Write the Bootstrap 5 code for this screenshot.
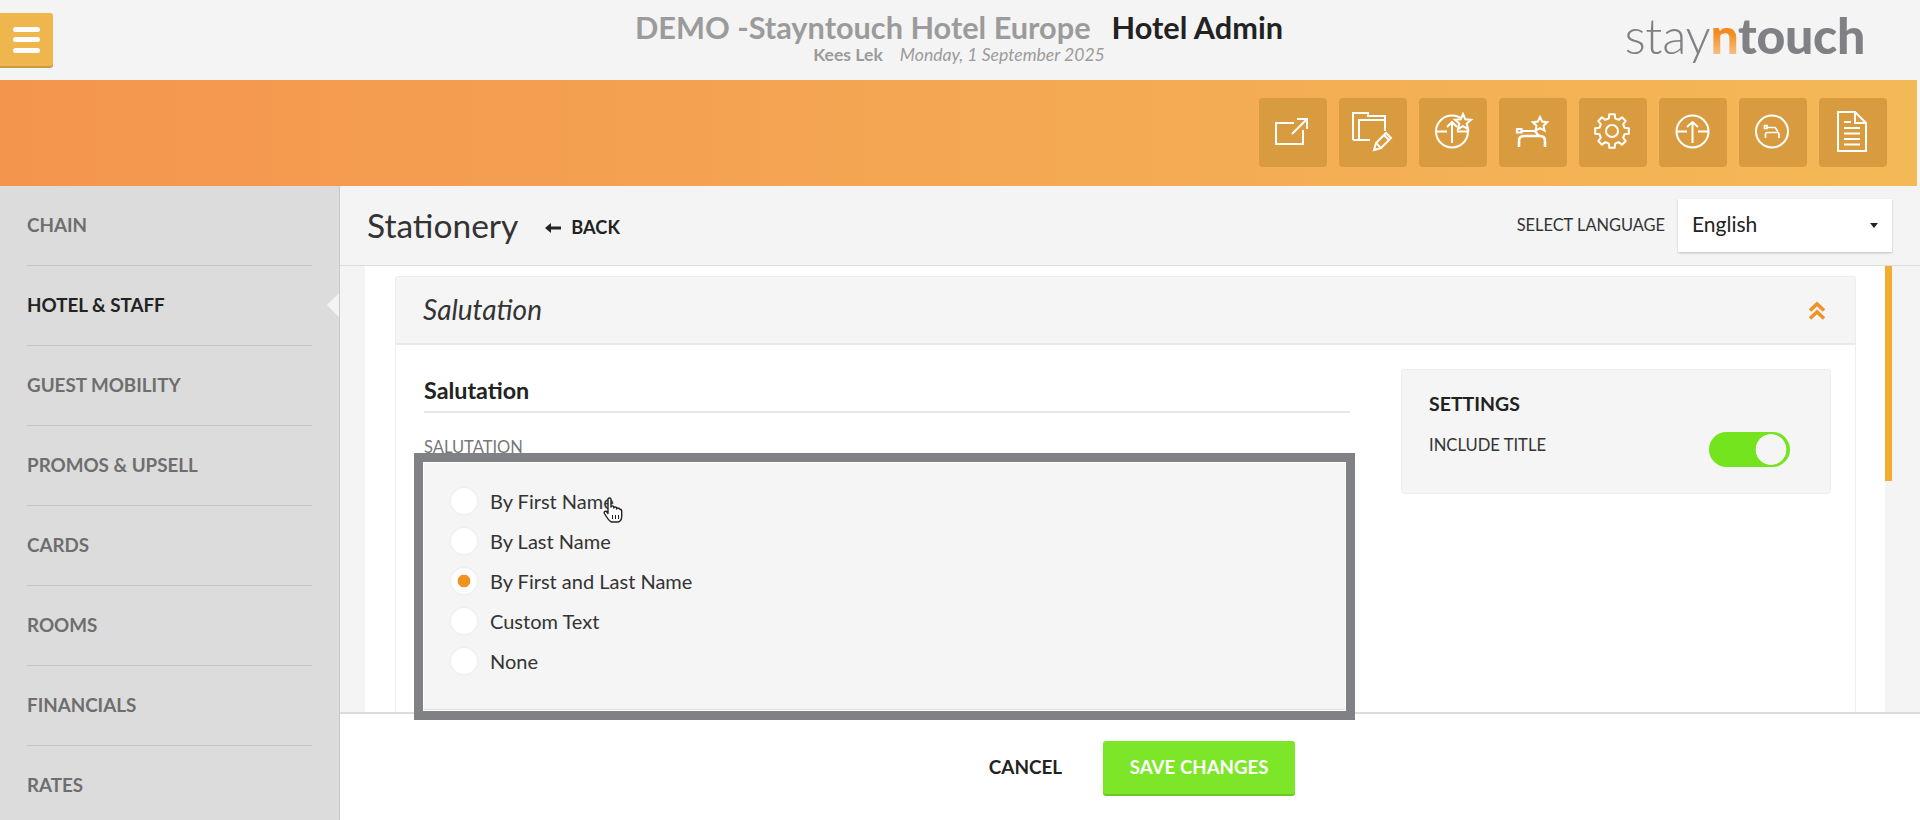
<!DOCTYPE html>
<html lang="en">
<head>
<meta charset="utf-8">
<title>Stationery</title>
<link rel="stylesheet" href="https://cdn.jsdelivr.net/npm/bootstrap@5.3.0/dist/css/bootstrap.min.css">
<style>
html,body{height:820px;overflow:hidden}
body{font-family:"Lato","Liberation Sans",sans-serif;background:#f4f4f4;color:#333}
.app-root{width:1920px;height:820px}
.top-head{height:80px;background:#f4f4f4}
.burger{left:0;top:13px;width:53px;height:53px;background:#f0b64e;border-radius:0 3px 3px 0;box-shadow:0 2px 0 #c99a45;gap:5.5px;padding-left:13px}
.burger span{display:block;width:27px;height:5px;background:#fff;border-radius:3px}
.head-titles{line-height:1;padding-top:13px;margin-left:-2px}
.h-site{font-size:30.7px;font-weight:700;color:#9b9b9b}
.h-mod{font-size:30.7px;font-weight:700;color:#222;margin-left:21px}
.h-sub{font-size:17.6px;color:#9b9b9b;margin-top:2px}
.h-user{font-weight:700;margin-right:17px}
.brand-logo{right:55px;top:5px;font-size:50px;line-height:60px;color:#808184;letter-spacing:-.3px}
.brand-logo .lg-l{font-weight:300}
.brand-logo .lg-n{font-weight:900;background:linear-gradient(#f28a1e 45%,#f8d8b0);-webkit-background-clip:text;background-clip:text;color:transparent}
.brand-logo .lg-t{font-weight:900}
.tool-band{height:106px;width:1917px;background:linear-gradient(90deg,#f4954e,#f4b957);padding:18px 30px 0 0;gap:12px}
.tool-btn{width:68px;height:69px;background:#d99b3f;border-radius:4px}
.tool-btn svg{width:68px;height:68px;fill:none;stroke:#fff;stroke-width:2}
.body-row{height:634px}
.side-nav{width:340px;background:#dcdcdc;border-right:1px solid #c9c9c9;overflow:hidden;flex-shrink:0}
.side-item{height:80px;margin:0 27px;border-bottom:1px solid #c8c8c8;padding-top:27px;font-size:18.8px;font-weight:700;color:#6e6e6e;line-height:24px;position:relative}
.side-item.is-on{color:#222}
.side-item.is-on::after{content:"";position:absolute;right:-27px;top:27px;border:12px solid transparent;border-right-color:#f4f4f4;border-left-width:0}
.main-col{width:1580px}
.page-head{height:80px;padding:0 28px 0 27px;border-bottom:1px solid #dedede}
.page-title{font-size:33.5px;font-weight:400;color:#333;margin:0}
.back-lnk{font-size:18.2px;font-weight:700;color:#222;margin-left:27px;gap:10px;text-decoration:none;padding-top:5px}
.lang-lbl{font-size:16.4px;color:#333;margin-right:13px}
.lang-sel{width:214px;height:53px;background:#fff;box-shadow:0 1px 2px rgba(0,0,0,.22);padding:0 14px;font-size:21px;color:#222;line-height:1}
.lang-txt{margin-top:-4px}
.lang-caret{border:4px solid transparent;border-top:5px solid #222;border-bottom:0}
.pane{height:446px;overflow:hidden;margin-left:25px;width:1520px;background:#fff;padding:10px 29px 0 30px}
.scroll-thumb{right:28px;top:80px;width:7px;height:215px;background:#f4ac30}
.panel-box{border:1px solid #eee;height:600px;border-radius:2px}
.panel-top{height:68px;background:#f5f5f5;border-bottom:2px solid #e9e9e9;padding:0 29px 0 27px}
.panel-ttl{font-size:28px;font-style:italic;font-weight:400;color:#333;margin:0}
.panel-main{padding:24px 21px 0 28px;gap:51px}
.left-col{width:926px;padding-top:6px}
.sec-ttl{font-size:23.3px;font-weight:700;color:#222;line-height:30px;padding-bottom:6px;border-bottom:2px solid #e9e9e9;margin:0}
.fld-lbl{font-size:16.5px;color:#777;margin-top:23px;line-height:22px}
.set-box{width:430px;height:125px;background:#f5f5f5;border:1px solid #eee;border-radius:3px;padding:20px 27px}
.set-ttl{font-size:19.5px;font-weight:700;color:#222;line-height:28px;margin:0}
.set-row{margin-top:14px;padding-right:13px}
.set-lbl{font-size:16.6px;color:#333;line-height:24px;margin-top:1px}
.form-check-input.tgl{width:81px;height:35px;margin:0;border:0;border-radius:18px;background-color:#74e41e;background-image:radial-gradient(circle at 62px 50%,#f5f5f5 15px,transparent 15.7px);background-size:auto;background-position:0 0;box-shadow:none;float:none}
.focus-frame{left:74px;top:267px;width:941px;height:267px;z-index:5;border:9px solid #808184;background:#f5f5f5;padding:19px 0 0 28px;box-shadow:inset 0 0 0 1px #fff,inset 0 -2px 1px #ddd}
.focus-frame .form-check{display:flex;align-items:center;height:40px;margin:0;padding:0;gap:13px}
.focus-frame .form-check-input{float:none;margin:0;width:26px;height:26px;border:0;background-color:#fff;box-shadow:0 0 3px rgba(0,0,0,.08)}
.focus-frame .form-check-input:checked{background-color:#fff;background-image:radial-gradient(circle,#f0941f 6px,transparent 6.7px);background-size:auto}
.focus-frame .form-check-label{font-size:20px;color:#333}
.hand-cur{left:263px;top:311px;width:21px;height:26px;z-index:6}
.foot-bar{height:108px;background:#fff;border-top:2px solid #dcdcdc}
.foot-in{gap:41px;margin-left:24px}
.cancel-lnk{font-size:18.9px;font-weight:700;color:#222;text-decoration:none}
.btn.save-btn{width:192px;height:53px;background:#7de628;border:0;border-radius:3px;color:#fff;font-size:18.7px;font-weight:700;box-shadow:0 2px 0 #6cc822;padding:0}
</style>
</head>
<body>
<div class="app-root d-flex flex-column position-relative">
  <header class="top-head position-relative d-flex justify-content-center">
    <div class="burger position-absolute d-flex flex-column justify-content-center"><span></span><span></span><span></span></div>
    <div class="head-titles text-center">
      <div><span class="h-site">DEMO -Stayntouch Hotel Europe</span><span class="h-mod">Hotel Admin</span></div>
      <div class="h-sub"><span class="h-user">Kees Lek</span><em>Monday, 1 September 2025</em></div>
    </div>
    <div class="brand-logo position-absolute"><span class="lg-l">stay</span><span class="lg-n">n</span><span class="lg-t">touch</span></div>
  </header>

  <div class="tool-band d-flex justify-content-end">
    <div class="tool-btn"><svg viewBox="0 0 68 68"><path d="M35 25H17V46H44V32"/><path d="M33 36L48 21M38 21H48V31"/></svg></div>
    <div class="tool-btn"><svg viewBox="0 0 68 68"><path d="M14 42V15H29V18H46V33M20 42V22H46M14 42H31"/><path d="M35 52l2-7L47 35l5 5L42 50zM37 45l5 5M45 37l5 5"/></svg></div>
    <div class="tool-btn"><svg viewBox="0 0 68 68"><circle cx="33" cy="33.500" r="16"/><path d="M17 33.500H28M38 33.500H49M33 45V24M28 29l5-5 5 5"/><path fill="#d99b3f" d="M44 16l2.300 5.200 5.700.500-4.300 3.800 1.300 5.600-5-3-5 3 1.300-5.600-4.300-3.800 5.700-.500z"/></svg></div>
    <div class="tool-btn"><svg viewBox="0 0 68 68"><path stroke-width="2.600" d="M20 49V43Q20 38 25 38H41Q46 38 46 43V49"/><path stroke-width="2.200" d="M18 31h4.500v3.500h-4.500zM22 33h14l4 5"/><path fill="#d99b3f" d="M41 19l2.200 4.600 5 .6-3.700 3.500 1 5-4.500-2.500-4.500 2.500 1-5-3.700-3.500 5-.6z"/></svg></div>
    <div class="tool-btn"><svg viewBox="0 0 68 68"><g transform="translate(33 33)" stroke-linejoin="round"><polygon points="12.600,-3.150 16.800,-2.660 16.800,2.660 12.600,3.150 11.140,6.680 13.760,10 10,13.760 6.680,11.140 3.150,12.600 2.660,16.800 -2.660,16.800 -3.150,12.600 -6.680,11.140 -10,13.760 -13.760,10 -11.140,6.680 -12.600,3.150 -16.800,2.660 -16.800,-2.660 -12.600,-3.150 -11.140,-6.680 -13.760,-10 -10,-13.760 -6.680,-11.140 -3.150,-12.600 -2.660,-16.800 2.660,-16.800 3.150,-12.600 6.680,-11.140 10,-13.760 13.760,-10 11.140,-6.680"/><circle r="6"/></g></svg></div>
    <div class="tool-btn"><svg viewBox="0 0 68 68"><circle cx="33.500" cy="33.500" r="16"/><path d="M17.500 33.500H28M39 33.500H49.500M33.500 45V24M28 29l5.500-5 5.500 5"/></svg></div>
    <div class="tool-btn"><svg viewBox="0 0 68 68"><circle cx="33" cy="33.500" r="16"/><path stroke-width="1.700" d="M26.500 40V36.500Q26.500 34.500 28.500 34.500H38Q40 34.500 40 36.500V40M25.500 27.500h2.500v3h-2.500zM28 29.500H36l3 4"/></svg></div>
    <div class="tool-btn"><svg viewBox="0 0 68 68"><path d="M19 14H36L47 25V53H19ZM36 14V25H47M25 24H32M25 30H41M25 35.500H41M25 41H41M25 46.500H41"/></svg></div>
  </div>

  <div class="body-row d-flex">
    <nav class="side-nav">
      <div class="side-item">CHAIN</div>
      <div class="side-item is-on">HOTEL &amp; STAFF</div>
      <div class="side-item">GUEST MOBILITY</div>
      <div class="side-item">PROMOS &amp; UPSELL</div>
      <div class="side-item">CARDS</div>
      <div class="side-item">ROOMS</div>
      <div class="side-item">FINANCIALS</div>
      <div class="side-item">RATES</div>
    </nav>

    <main class="main-col position-relative d-flex flex-column">
      <div class="page-head d-flex align-items-center">
        <h1 class="page-title">Stationery</h1>
        <a class="back-lnk d-flex align-items-center" href="#"><svg width="16" height="12" viewBox="0 0 16 12"><path fill="#222" d="M0 6l6-5v3.500h10v3H6V11z"/></svg>BACK</a>
        <div class="ms-auto d-flex align-items-center">
          <span class="lang-lbl">SELECT LANGUAGE</span>
          <div class="lang-sel d-flex align-items-center justify-content-between"><span class="lang-txt">English</span><span class="lang-caret"></span></div>
        </div>
      </div>

      <div class="pane">
        <div class="panel-box">
          <div class="panel-top d-flex align-items-center justify-content-between">
            <h2 class="panel-ttl">Salutation</h2>
            <svg width="18" height="19" viewBox="0 0 18 19" fill="none" stroke="#ee922a" stroke-width="3.500"><path d="M2 9.500l7-6.500 7 6.500M2 17.500l7-6.500 7 6.500"/></svg>
          </div>
          <div class="panel-main d-flex">
            <div class="left-col">
              <h3 class="sec-ttl">Salutation</h3>
              <div class="fld-lbl">SALUTATION</div>
            </div>
            <aside class="set-box">
              <h4 class="set-ttl">SETTINGS</h4>
              <div class="set-row d-flex justify-content-between align-items-start">
                <span class="set-lbl">INCLUDE TITLE</span>
                <input class="form-check-input tgl" type="checkbox" role="switch" checked aria-label="Include title">
              </div>
            </aside>
          </div>
        </div>
      </div>
      <div class="scroll-thumb position-absolute"></div>

      <div class="foot-bar mt-auto d-flex align-items-center justify-content-center">
        <div class="foot-in d-flex align-items-center">
          <a class="cancel-lnk" href="#">CANCEL</a>
          <button class="btn save-btn" type="button">SAVE CHANGES</button>
        </div>
      </div>

      <div class="focus-frame position-absolute">
        <div class="form-check"><input class="form-check-input" type="radio" name="sal" id="r1"><label class="form-check-label" for="r1">By First Name</label></div>
        <div class="form-check"><input class="form-check-input" type="radio" name="sal" id="r2"><label class="form-check-label" for="r2">By Last Name</label></div>
        <div class="form-check"><input class="form-check-input" type="radio" name="sal" id="r3" checked><label class="form-check-label" for="r3">By First and Last Name</label></div>
        <div class="form-check"><input class="form-check-input" type="radio" name="sal" id="r4"><label class="form-check-label" for="r4">Custom Text</label></div>
        <div class="form-check"><input class="form-check-input" type="radio" name="sal" id="r5"><label class="form-check-label" for="r5">None</label></div>
      </div>
      <svg class="hand-cur position-absolute" viewBox="0 0 21 26"><path fill="#fff" stroke="#222" stroke-width="1.400" stroke-linejoin="round" d="M5 2.500c0-2 3-2 3 0V10c0-1.500 2.800-1.500 2.800 0v1c0-1.400 2.800-1.400 2.800 0v1c0-1.300 2.800-1.300 2.800 0 1.300 0 2.300 1 2.300 2.500V19c0 3-1.700 5.500-3.500 6H8.500C6 24 4 21 1.500 16.500c-1-2 1.500-3 2.500-1.500l1 1.500z"/><path fill="none" stroke="#222" d="M9.500 18v4M12.500 18v4M15.500 18v4"/></svg>
    </main>
  </div>
</div>
<script src="https://cdn.jsdelivr.net/npm/bootstrap@5.3.0/dist/js/bootstrap.bundle.min.js"></script>
</body>
</html>
